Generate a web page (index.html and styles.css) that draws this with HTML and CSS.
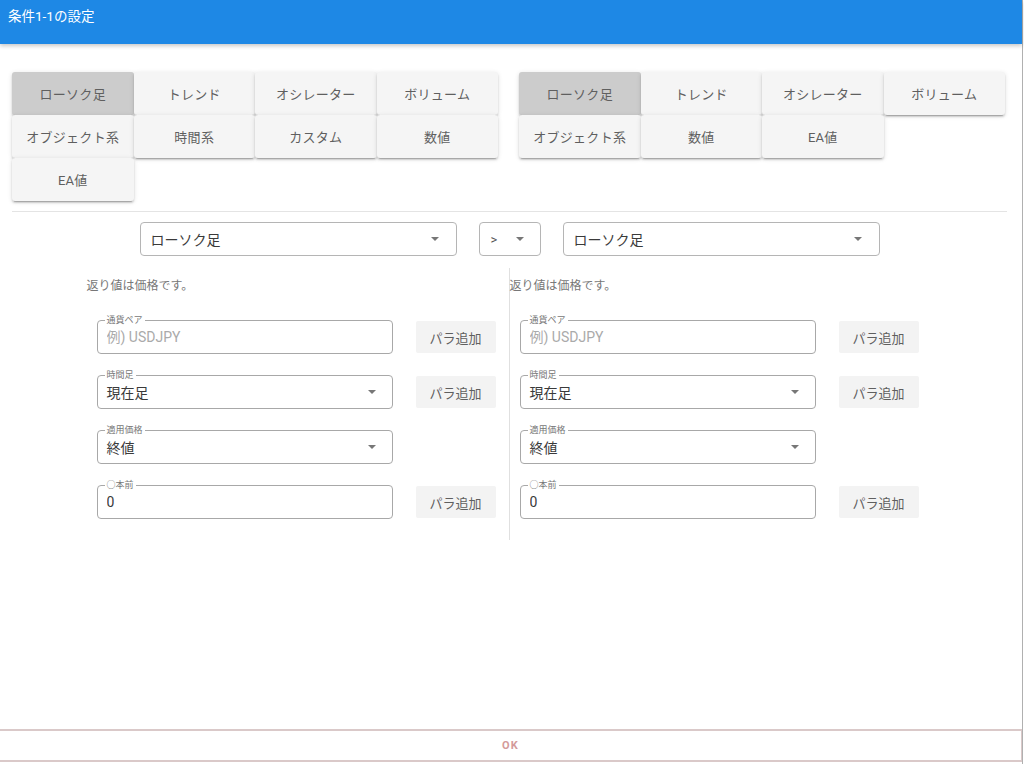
FILE: index.html
```html
<!DOCTYPE html>
<html lang="ja">
<head>
    <meta charset="UTF-8">
    <meta name="viewport" content="width=device-width, initial-scale=1.0">
    <title>条件1-1の設定</title>
    <link rel="stylesheet" href="styles.css">
</head>
<body>
    <div class="dialog">
        <div class="toolbar">条件1-1の設定</div>

        <div class="content">
            <div class="type-groups">
                <div class="type-group">
                    <button class="type-btn active">ローソク足</button>
                    <button class="type-btn">トレンド</button>
                    <button class="type-btn">オシレーター</button>
                    <button class="type-btn">ボリューム</button>
                    <button class="type-btn">オブジェクト系</button>
                    <button class="type-btn">時間系</button>
                    <button class="type-btn">カスタム</button>
                    <button class="type-btn">数値</button>
                    <button class="type-btn">EA値</button>
                </div>
                <div class="type-group">
                    <button class="type-btn active">ローソク足</button>
                    <button class="type-btn">トレンド</button>
                    <button class="type-btn">オシレーター</button>
                    <button class="type-btn">ボリューム</button>
                    <button class="type-btn">オブジェクト系</button>
                    <button class="type-btn">数値</button>
                    <button class="type-btn">EA値</button>
                </div>
            </div>

            <hr class="divider">

            <div class="compare-row">
                <div class="select wide">
                    <span>ローソク足</span>
                    <span class="arrow"></span>
                </div>
                <div class="select op">
                    <span>&gt;</span>
                    <span class="arrow"></span>
                </div>
                <div class="select wide">
                    <span>ローソク足</span>
                    <span class="arrow"></span>
                </div>
            </div>

            <div class="params">
                <div class="param-col left">
                    <p class="note">返り値は価格です。</p>
                    <div class="param-row">
                        <fieldset class="field">
                            <legend>通貨ペア</legend>
                            <input class="field-input" type="text" placeholder="例) USDJPY">
                        </fieldset>
                        <button class="add-btn">パラ追加</button>
                    </div>
                    <div class="param-row">
                        <fieldset class="field">
                            <legend>時間足</legend>
                            <div class="field-select"><span>現在足</span><span class="arrow"></span></div>
                        </fieldset>
                        <button class="add-btn">パラ追加</button>
                    </div>
                    <div class="param-row">
                        <fieldset class="field">
                            <legend>適用価格</legend>
                            <div class="field-select"><span>終値</span><span class="arrow"></span></div>
                        </fieldset>
                    </div>
                    <div class="param-row">
                        <fieldset class="field">
                            <legend>○本前</legend>
                            <input class="field-input" type="text" value="0">
                        </fieldset>
                        <button class="add-btn">パラ追加</button>
                    </div>
                </div>

                <div class="param-col">
                    <p class="note">返り値は価格です。</p>
                    <div class="param-row">
                        <fieldset class="field">
                            <legend>通貨ペア</legend>
                            <input class="field-input" type="text" placeholder="例) USDJPY">
                        </fieldset>
                        <button class="add-btn">パラ追加</button>
                    </div>
                    <div class="param-row">
                        <fieldset class="field">
                            <legend>時間足</legend>
                            <div class="field-select"><span>現在足</span><span class="arrow"></span></div>
                        </fieldset>
                        <button class="add-btn">パラ追加</button>
                    </div>
                    <div class="param-row">
                        <fieldset class="field">
                            <legend>適用価格</legend>
                            <div class="field-select"><span>終値</span><span class="arrow"></span></div>
                        </fieldset>
                    </div>
                    <div class="param-row">
                        <fieldset class="field">
                            <legend>○本前</legend>
                            <input class="field-input" type="text" value="0">
                        </fieldset>
                        <button class="add-btn">パラ追加</button>
                    </div>
                </div>
            </div>
        </div>

        <div class="footer">
            <button class="ok-btn">OK</button>
        </div>
    </div>
</body>
</html>
```

FILE: styles.css
```css
* {
    box-sizing: border-box;
}
body {
    margin: 0;
    font-family: Roboto, "Noto Sans CJK JP", sans-serif;
    background-color: #fff;
    color: #333;
}
.dialog {
    width: 1023px;
    height: 764px;
    display: flex;
    flex-direction: column;
    border-right: 1px solid #b0b0b0;
}
.toolbar {
    height: 44px;
    padding: 8px 8px;
    background-color: #1e88e5;
    color: #fff;
    font-size: 13.5px;
    line-height: 16px;
    box-shadow: 0 2px 4px rgba(0, 0, 0, 0.22);
    position: relative;
    z-index: 1;
}
.content {
    padding: 28px 15px 0 12px;
}

/* type buttons */
.type-groups {
    display: grid;
    grid-template-columns: 499px 1fr;
    column-gap: 8px;
}
.type-group {
    display: flex;
    flex-wrap: wrap;
    align-content: flex-start;
}
.type-btn {
    width: 121.5px;
    height: 43px;
    border: none;
    border-radius: 3px;
    background-color: #f5f5f5;
    color: #5f5f5f;
    font-family: inherit;
    font-size: 13px;
    letter-spacing: 0.02em;
    cursor: pointer;
    box-shadow: 0 3px 1px -2px rgba(0, 0, 0, 0.2), 0 2px 2px 0 rgba(0, 0, 0, 0.14), 0 1px 5px 0 rgba(0, 0, 0, 0.12);
}
.type-btn.active {
    background-color: #cccccc;
}
.divider {
    margin: 10px 0 10px;
    border: none;
    border-top: 1px solid #e4e4e4;
}

/* compare selects */
.compare-row {
    display: flex;
    justify-content: center;
    gap: 22px;
}
.select {
    height: 34px;
    display: flex;
    align-items: center;
    justify-content: space-between;
    padding: 0 17px 0 10px;
    border: 1px solid #b5b5b5;
    border-radius: 4px;
    font-size: 14px;
    color: #3a3a3a;
}
.select.wide {
    width: 317px;
}
.select.op {
    width: 62px;
    padding-left: 11px;
    padding-right: 16px;
    font-size: 13px;
    color: #555;
}
.arrow {
    width: 0;
    height: 0;
    border-left: 4px solid transparent;
    border-right: 4px solid transparent;
    border-top: 4px solid #777;
}

/* params */
.params {
    width: 846px;
    margin: 12px auto 0;
    display: grid;
    grid-template-columns: 1fr 1fr;
}
.param-col {
    padding: 10px 0 21px;
}
.param-col.left {
    border-right: 1px solid #e0e0e0;
}
.note {
    margin: 0 0 21px;
    font-size: 12px;
    line-height: 16px;
    color: #777;
}
.param-row {
    display: flex;
    align-items: flex-end;
    gap: 23px;
    padding-left: 10px;
    margin-bottom: 16px;
}
.param-row:last-child {
    margin-bottom: 0;
}
.field {
    width: 296px;
    margin: 0;
    padding: 0 9px 5px;
    border: 1px solid #a8a8a8;
    border-radius: 4px;
    min-width: 0;
}
.field legend {
    margin-left: -2px;
    padding: 0 2px;
    font-size: 9px;
    line-height: 10px;
    color: #777;
}
.field-input {
    display: block;
    width: 100%;
    height: 23px;
    padding: 0;
    border: none;
    outline: none;
    font-family: inherit;
    font-size: 14px;
    color: #3a3a3a;
    background: none;
}
.field-input::placeholder {
    color: #aaa;
}
.field-select {
    height: 23px;
    display: flex;
    align-items: center;
    justify-content: space-between;
    padding-right: 7px;
    font-size: 14px;
    color: #3a3a3a;
}
.add-btn {
    width: 80px;
    height: 32px;
    margin-bottom: 1px;
    border: none;
    border-radius: 2px;
    background-color: #f3f3f3;
    color: #5f5f5f;
    font-family: inherit;
    font-size: 13px;
    cursor: pointer;
}

/* footer */
.footer {
    margin-top: auto;
    margin-bottom: 2px;
}
.ok-btn {
    display: block;
    width: 100%;
    height: 33px;
    border-style: solid;
    border-color: #dac9c9;
    border-width: 2px 1px 2px 0;
    background-color: #fff;
    color: #d49a9a;
    font-family: Roboto, sans-serif;
    font-size: 11px;
    font-weight: 700;
    letter-spacing: 0.1em;
    cursor: pointer;
}
```
